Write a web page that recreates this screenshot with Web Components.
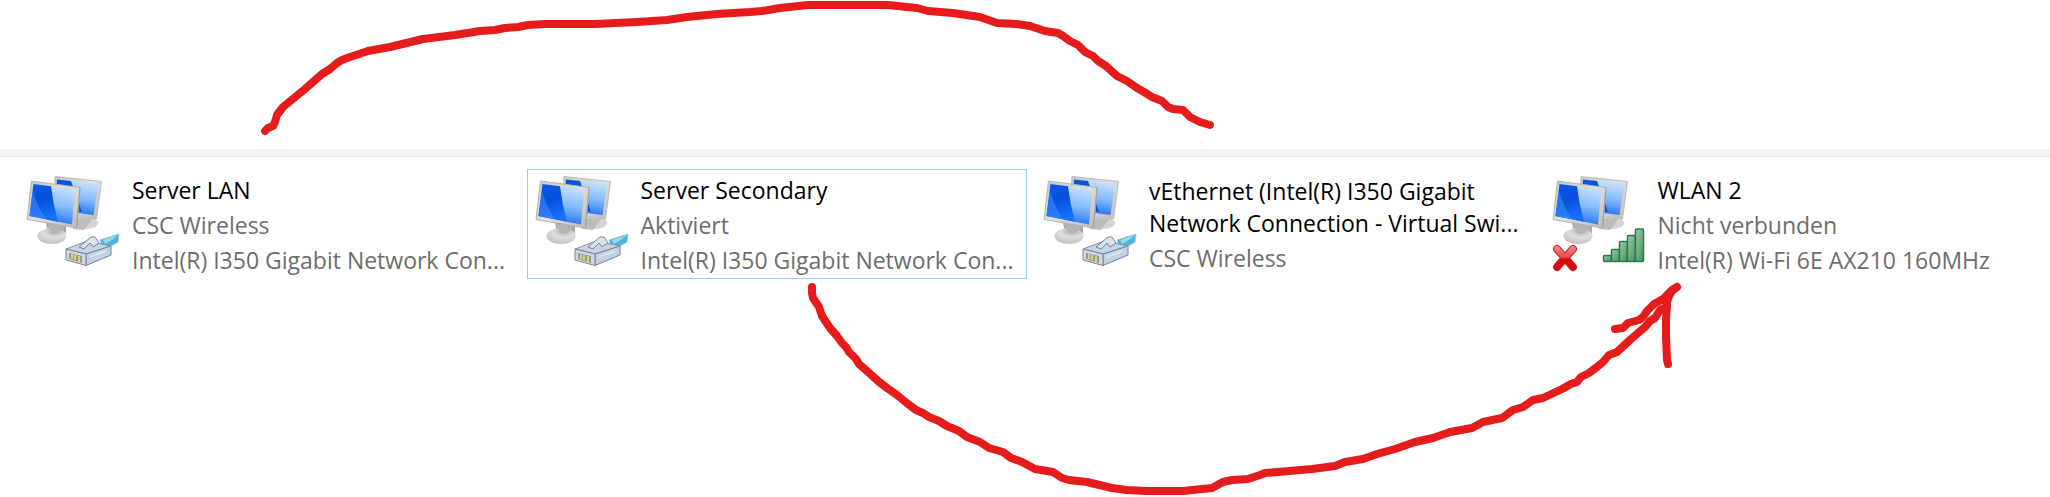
<!DOCTYPE html>
<html lang="de">
<head>
<meta charset="UTF-8">
<meta name="viewport" content="width=device-width, initial-scale=1.0">
<title>Netzwerkverbindungen</title>
<style>
    body {
        margin: 0;
        background: #fff;
        font-family: "Open Sans", "Noto Sans", sans-serif;
    }
</style>
</head>
<body>
<connections-view>
    <connection-tile>
        Server LAN
        <span slot="status">CSC Wireless</span>
        <span slot="device">Intel(R) I350 Gigabit Network Con...</span>
    </connection-tile>
    <connection-tile selected>
        Server Secondary
        <span slot="status">Aktiviert</span>
        <span slot="device">Intel(R) I350 Gigabit Network Con...</span>
    </connection-tile>
    <connection-tile>
        vEthernet (Intel(R) I350 Gigabit<br>Network Connection - Virtual Swi...
        <span slot="status">CSC Wireless</span>
    </connection-tile>
    <connection-tile kind="wifi-off">
        WLAN 2
        <span slot="status">Nicht verbunden</span>
        <span slot="device">Intel(R) Wi-Fi 6E AX210 160MHz</span>
    </connection-tile>
    <pen-marks slot="overlay"></pen-marks>
</connections-view>

<script>
const PLUG = `
    <g stroke-linejoin="round">
        <path d="M74 68 L93 62 L92 70 L82 76 L76 74 Z" fill="#4db3da" stroke="#9cc9dc"/>
        <path d="M77 68 L92 63 L86 68 L79 72 Z" fill="#90d9ef"/>
        <path d="M40 77 L61 69 L85 74 L60 82 Z" fill="#c6d4e6" stroke="#8693a8"/>
        <path d="M60 82 L85 74 L85 83 L60 93.500 Z" fill="#c2d1e5" stroke="#77859b"/>
        <path d="M40 77 L60 82 L60 93.500 L40 88 Z" fill="#cdd8e6" stroke="#77859b"/>
        <path d="M43 81 L56 84 L56 91 L43 87 Z" fill="#98998a"/>
        <path d="M46 82 V87 M49 83 V88 M53 84 V90" stroke="#ddd077" stroke-width="2"/>
        <path d="M53 75 L65 65 L69 65 L73 71 L67 75 L64 71 L58 77 Z" fill="#d9e4f0" stroke="#77859b"/>
        <path d="M64 85 L80 79" stroke="#dbe5f1" stroke-width="2"/>
    </g>`;

const WIFI_OFF = `
    <path d="M5 77 L21 95 M21 77 L5 95" stroke="#c0282c" stroke-width="8" stroke-linecap="round"/>
    <path d="M5 77 L21 95 M21 77 L5 95" stroke="url(#cross)" stroke-width="6" stroke-linecap="round"/>
    <g fill="url(#bar)" stroke="#2c7849" stroke-width="1.5">
        <rect x="51.5" y="83.5" width="8" height="6" rx="1"/>
        <rect x="59.5" y="77.5" width="8" height="12" rx="1"/>
        <rect x="67.5" y="69.5" width="8" height="20" rx="1"/>
        <rect x="75.5" y="63.5" width="8" height="26" rx="1"/>
        <rect x="83.5" y="57" width="8" height="32.5" rx="1"/>
    </g>`;

class ConnectionIcon extends HTMLElement {
    connectedCallback() {
        const badge = this.getAttribute('kind') === 'wifi-off' ? WIFI_OFF : PLUG;

        this.attachShadow({ mode: 'open' });
        this.shadowRoot.innerHTML = `
            <style>
                :host {
                    display: block;
                    flex: none;
                }
                svg {
                    display: block;
                    width: 96px;
                    height: 104px;
                }
            </style>
            <svg viewBox="0 0 96 104" fill="none" aria-hidden="true">
                <defs>
                    <linearGradient id="dark" x1="0" y1="0" x2=".3" y2="1">
                        <stop offset="0" stop-color="#0b5ae4"/>
                        <stop offset=".5" stop-color="#0650dc"/>
                        <stop offset="1" stop-color="#1670fa"/>
                    </linearGradient>
                    <linearGradient id="light" x1=".3" y1="0" x2=".1" y2="1">
                        <stop offset="0" stop-color="#c4e0ff"/>
                        <stop offset=".45" stop-color="#86bbfb"/>
                        <stop offset="1" stop-color="#0f63f2"/>
                    </linearGradient>
                    <linearGradient id="frame" x1="0" y1="0" x2="1" y2="1">
                        <stop offset="0" stop-color="#c6c7c5"/>
                        <stop offset=".5" stop-color="#e0dfdc"/>
                        <stop offset="1" stop-color="#b9b9b8"/>
                    </linearGradient>
                    <radialGradient id="foot" cx=".6" cy=".2" r=".8">
                        <stop offset="0" stop-color="#aeaeae"/>
                        <stop offset=".5" stop-color="#dedede"/>
                        <stop offset="1" stop-color="#c2c2c2"/>
                    </radialGradient>
                    <linearGradient id="cross" x1="0" y1="73" x2="0" y2="99" gradientUnits="userSpaceOnUse">
                        <stop offset="0" stop-color="#f08c8c"/>
                        <stop offset=".45" stop-color="#e85050"/>
                        <stop offset=".55" stop-color="#e00808"/>
                        <stop offset="1" stop-color="#d00c0c"/>
                    </linearGradient>
                    <linearGradient id="bar" x1="0" y1="0" x2="1" y2="1">
                        <stop offset="0" stop-color="#9ad0ac"/>
                        <stop offset="1" stop-color="#438f5e"/>
                    </linearGradient>
                </defs>
                <!-- rear monitor -->
                <ellipse cx="60" cy="51" rx="12" ry="6" fill="#d5d5d5"/>
                <path d="M48 46 L66 47 L58 58 L47 57 Z" fill="#bcbcbc"/>
                <path d="M29 4.500 L75.500 9.500 L70.500 47 L27 42 Z" fill="url(#frame)" stroke="#bdbdba"/>
                <path d="M31 7.500 L72 12 L67.500 43 L29 38 Z" fill="url(#light)"/>
                <path d="M31 7.500 L45 9 L56 40 L29 36 Z" fill="#0b55dc"/>
                <!-- front monitor -->
                <path d="M20 50 L40 54 L40 62 L22 62 Z" fill="#a9a9a9"/>
                <ellipse cx="26" cy="64" rx="14.500" ry="8" fill="url(#foot)"/>
                <path d="M22 52 L38 55 Q34 63 25 61 Z" fill="#b4b4b4"/>
                <path d="M5.500 9 L54 15.500 L50.500 56 L1 47.500 Z" fill="url(#frame)" stroke="#b4b4b1"/>
                <path d="M54 15.500 L50.500 56" stroke="#9f9f9d"/>
                <path d="M7.500 12 L49 17.500 L46 52.500 L3.500 44 Z" fill="url(#light)"/>
                <path d="M7.500 12 L25 14.300 Q27 32 32 49.700 L3.500 44 Z" fill="url(#dark)"/>
                <path d="M7 19 Q11 34 20 47 L3.500 44 Z" fill="#3c8afb" opacity=".6"/>
                ${badge}
            </svg>
        `;
    }
}

class ConnectionTile extends HTMLElement {
    connectedCallback() {
        const kind = this.getAttribute('kind') || 'lan';

        this.setAttribute('role', 'listitem');
        this.attachShadow({ mode: 'open' });
        this.shadowRoot.innerHTML = `
            <style>
                :host {
                    display: flex;
                    align-items: center;
                    gap: 10px;
                    box-sizing: border-box;
                    min-width: 0;
                    padding: 2px 7px;
                    border: 1px solid transparent;
                    font-size: 23px;
                    line-height: 32px;
                    white-space: nowrap;
                }
                :host([selected]) {
                    border-color: #99ccff;
                }
                .text {
                    display: flex;
                    flex-direction: column;
                    gap: 3px;
                    padding-top: 1px;
                    color: #6d6d6d;
                }
                .name {
                    color: #000;
                }
                ::slotted(span) {
                    display: block;
                }
            </style>
            <connection-icon kind="${kind}"></connection-icon>
            <div class="text">
                <div class="name"><slot></slot></div>
                <slot name="status"></slot>
                <slot name="device"></slot>
            </div>
        `;
    }
}

class PenMarks extends HTMLElement {
    connectedCallback() {
        this.attachShadow({ mode: 'open' });
        this.shadowRoot.innerHTML = `
            <style>
                :host {
                    position: absolute;
                    inset: 0;
                    overflow: hidden;
                    pointer-events: none;
                }
                svg {
                    display: block;
                    width: 100%;
                }
            </style>
            <svg viewBox="0 0 2050 497" fill="none" stroke="#e61c1c" stroke-width="8"
                 stroke-linecap="round" stroke-linejoin="round" aria-hidden="true">
                <!-- Server LAN to vEthernet -->
                <polyline points="265,131 268,128 273,126 275,122 277,115 283,107 305,89 322,74 330,69 337,63 342,60 350,57
                    368,51 390,47 423,39 455,35 480,31 495,30 505,28 518,27 528,25 545,24 595,24 637,22 667,20
                    687,17 717,14 750,12 762,11 780,8 808,5 888,5 917,8 928,11 953,13 980,17 997,23 1017,24
                    1030,26 1045,31 1058,33 1063,36 1070,41 1078,45 1085,52 1093,56 1098,61 1106,66 1117,76
                    1127,81 1137,88 1144,92 1152,97 1162,101 1168,107 1173,109 1183,110 1190,117 1200,122 1210,125"/>
                <!-- Server Secondary to WLAN 2 -->
                <polyline points="812,287 812,293 813,298 819,307 822,316 830,328 837,336 842,343 846,347 849,352 856,359
                    859,364 867,371 878,381 887,388 897,395 908,404 916,410 923,413 929,417 939,421 947,426
                    959,431 967,437 980,442 989,448 1003,452 1011,458 1022,462 1035,469 1053,472 1062,478
                    1069,480 1087,482 1112,488 1127,490 1147,491 1183,491 1212,488 1223,482 1232,480 1248,479
                    1260,475 1265,473 1278,472 1312,469 1335,466 1345,462 1363,459 1377,454 1395,449 1415,442
                    1433,438 1450,432 1472,428 1483,422 1502,418 1513,410 1523,407 1533,400 1543,398 1562,389
                    1571,384 1577,382 1581,377 1589,373 1597,367 1603,362 1609,355 1617,352 1630,340 1645,327
                    1650,321 1655,318 1660,310 1667,307"/>
                <polyline points="1668,364 1667,360 1666,337 1666,320 1667,302 1669,296 1672,291 1677,287"/>
                <polyline points="1677,287 1672,290 1663,299 1654,304 1647,311 1643,317 1639,320 1628,323 1623,328 1615,329"/>
            </svg>
        `;
    }
}

class ConnectionsView extends HTMLElement {
    connectedCallback() {
        this.attachShadow({ mode: 'open' });
        this.shadowRoot.innerHTML = `
            <style>
                :host {
                    display: block;
                    position: relative;
                    min-height: 100vh;
                }
                header {
                    height: 149px;
                }
                .divider {
                    height: 7px;
                    background: #f3f4f6;
                    border-bottom: 1px solid #e7e8ea;
                }
                .list {
                    display: grid;
                    grid-template-columns: repeat(4, minmax(0, 1fr));
                    gap: 8px;
                    padding: 12px 6px 12px 18px;
                }
            </style>
            <header></header>
            <div class="divider"></div>
            <div class="list" role="list"><slot></slot></div>
            <slot name="overlay"></slot>
        `;
    }
}

customElements.define('connection-icon', ConnectionIcon);
customElements.define('connection-tile', ConnectionTile);
customElements.define('pen-marks', PenMarks);
customElements.define('connections-view', ConnectionsView);
</script>
</body>
</html>
